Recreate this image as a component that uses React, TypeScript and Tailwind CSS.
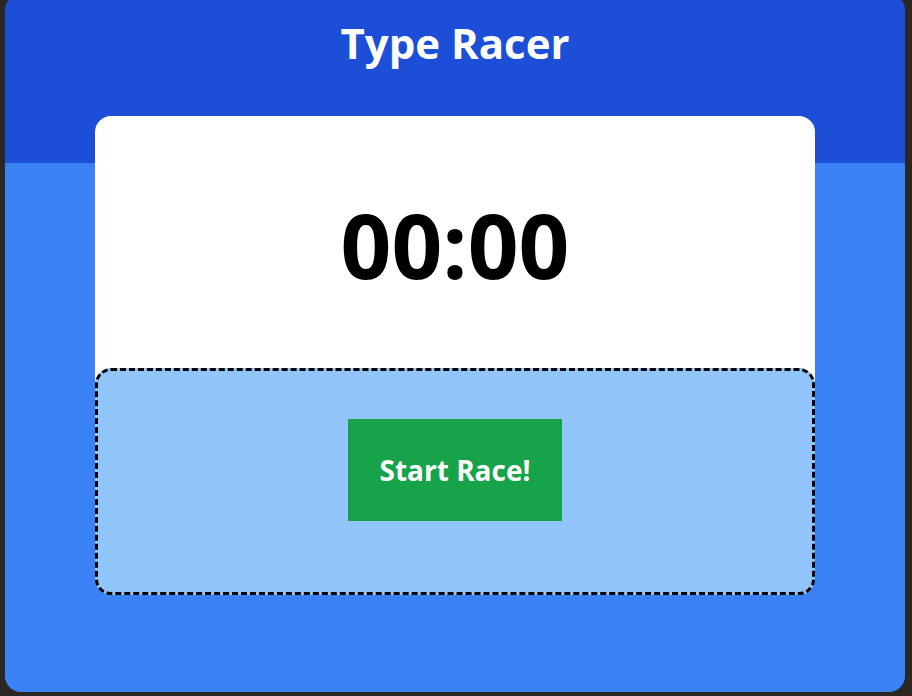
import React, { useState } from 'react';

const App: React.FC = () => {
  const [time] = useState('00:00');

  return (
    <div className="min-h-screen w-full bg-[#2b2824] overflow-hidden">
      <div className="ml-[5px] w-[900px] -mt-[6px] rounded-2xl bg-[linear-gradient(#1d4ed8_0_169px,#3b82f6_169px)] flex flex-col items-center pt-[19px] pb-[97px] font-['Open_Sans',sans-serif]">
        <h1 className="text-[42px] leading-[60px] font-bold text-white">Type Racer</h1>

        <div className="mt-[43px] w-[720px] flex flex-col">
          {/* timer */}
          <div className="bg-white rounded-t-2xl pt-[84px] pb-[78px] flex justify-center">
            <span className="text-[89px] leading-[90px] font-bold text-black">{time}</span>
          </div>

          {/* start area */}
          <div className="bg-[linear-gradient(#ffffff_0_20px,transparent_20px)]">
            <div className="rounded-2xl border-[3px] border-dashed border-black bg-[#93c5fd] pt-[48px] pb-[71px] flex justify-center">
              <button
                type="button"
                className="bg-[#16a34a] text-white font-bold text-[28px] leading-[38px] px-8 py-8"
              >
                Start Race!
              </button>
            </div>
          </div>
        </div>
      </div>
    </div>
  );
};

export default App;
